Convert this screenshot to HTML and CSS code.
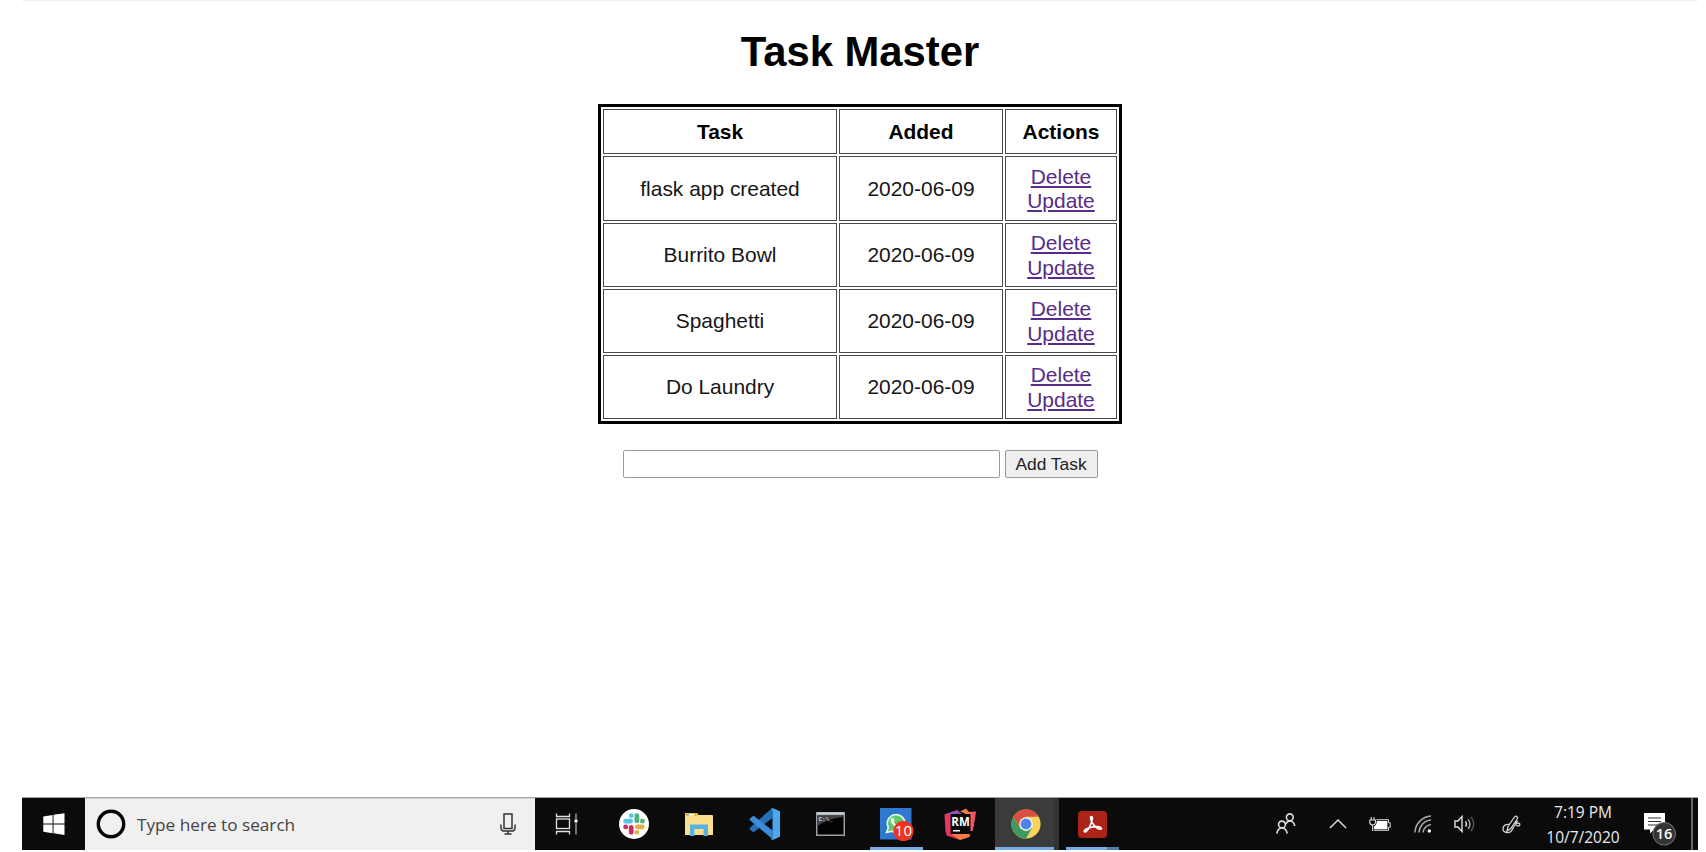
FILE: index.html
```
<!DOCTYPE html>
<html lang="en">
<head>
<meta charset="utf-8">
<title>Task Master</title>
<link rel="stylesheet" href="styles.css">
</head>
<body>
<main class="page">
  <h1 class="title">Task Master</h1>
  <table class="tasks">
    <tr class="head"><th class="c-task">Task</th><th class="c-added">Added</th><th class="c-actions">Actions</th></tr>
    <tr class="first"><td>flask app created</td><td>2020-06-09</td><td><a href="#">Delete</a><br><a href="#">Update</a></td></tr>
    <tr><td>Burrito Bowl</td><td>2020-06-09</td><td><a href="#">Delete</a><br><a href="#">Update</a></td></tr>
    <tr><td>Spaghetti</td><td>2020-06-09</td><td><a href="#">Delete</a><br><a href="#">Update</a></td></tr>
    <tr><td>Do Laundry</td><td>2020-06-09</td><td><a href="#">Delete</a><br><a href="#">Update</a></td></tr>
  </table>
  <form class="add-form">
    <input class="add-input" type="text" aria-label="Task">
    <button class="add-button" type="button">Add Task</button>
  </form>
</main>
<footer class="taskbar">
  <div class="start">
    <svg width="22" height="22" viewBox="0 0 22 22" fill="#fff"><path d="M.3 3.4 9.6 2v8.6H.3zM10.500 1.800 21.500.200v10.400h-11zM.3 11.500h9.300v8.700L.3 18.800zM10.500 11.500h11v10.400l-11-1.600z"/></svg>
  </div>
  <div class="search">
    <svg width="30" height="30" viewBox="0 0 30 30"><circle cx="15" cy="15" r="12.7" fill="none" stroke="#050505" stroke-width="3.4"/></svg>
    <span class="search-text">Type here to search</span>
    <svg class="mic" width="16" height="22" viewBox="0 0 16 22" fill="none" stroke="#333" stroke-width="1.500"><rect x="4" y="1" width="8" height="14.500"/><path d="M1 11.500v3.200c0 2.200 1.300 3.400 3.500 3.400h7c2.200 0 3.500-1.200 3.500-3.400v-3.200M8 18v3M4.500 21h7"/></svg>
  </div>
  <div class="slot view">
    <svg width="24" height="22" viewBox="0 0 24 22" fill="none" stroke="#e2e2e2" stroke-width="1.300"><path d="M1.500.500v3h13v-3M1.500 21.500v-3h13v3"/><rect x="1.500" y="6" width="13" height="9.500"/><path d="M21 .500v5.500M21 10v11.500" stroke="#aaa"/><path d="M19.500 6.500h3v3h-3z" fill="#fff" stroke="none"/></svg>
  </div>
  <div class="slot">
    <svg width="30" height="30" viewBox="0 0 30 30" fill="none" stroke-width="4.800" stroke-linecap="round"><circle cx="15" cy="15" r="15" fill="#fff"/><path d="M6.600 12.200h5M12.200 6.700h.1" stroke="#5bc3ea"/><path d="M17.900 6.700v5.200M23.400 12.200h.1" stroke="#4eb37d"/><path d="M18.300 17.900h5M17.900 23.300h.1" stroke="#e3b04a"/><path d="M12.200 18.300v5M6.600 17.900h.1" stroke="#cf2e5d"/></svg>
  </div>
  <div class="slot">
    <svg width="28" height="24" viewBox="0 0 28 24"><path d="M0 2q0-1 1-1h11l1.500 2H27q1 0 1 1v19H0z" fill="#fae08e"/><path d="M0 1h12.500v3H0z" fill="#edb93c"/><path d="M2 2h7v1.600H2z" fill="#fff"/><path d="M2 2h2v1.600H2z" fill="#55b4e4"/><path d="M5 24V12.500h18V24h-4.500v-7h-9v7z" fill="#58b2e1"/></svg>
  </div>
  <div class="slot">
    <svg width="32" height="32" viewBox="0 0 32 32"><path d="M23.500 1v9L5.300 23.700q-1 .7-1.800.1L1 21.500q-.8-1 0-1.800L22 1z" fill="#2470b5"/><path d="M1 10.500 3.500 8.200q.8-.6 1.800.1L23.500 22.500v8.500L1 12.300q-.8-.9 0-1.800z" fill="#3a8bd8"/><path d="M23.500 0 31 3.200v25.600L23.500 32l-2-1.200q2 .3 2-1.800V3q0-2-2-1.800z" fill="#49a9ef"/></svg>
  </div>
  <div class="slot">
    <svg width="29" height="24" viewBox="0 0 29 24"><path d="M0 0h29v24H0z" fill="#9b9fa2"/><path d="M1 .500h27v2H1z" fill="#c9d3d8"/><path d="M1.500 3.500h26v19h-26z" fill="#020202"/><path d="M1.500 3.500h26v1.500C15 6 8 10 1.500 14z" fill="#414345"/><text x="2.500" y="9.300" class="prompt">C:\_</text></svg>
  </div>
  <div class="slot running whatsapp">
    <svg width="36" height="34" viewBox="0 0 36 34"><path d="M0 1h31.500v31.500H0z" fill="#2f78d0"/><path d="m6.500 25.500 1.800-5A8.800 8.800 0 1 1 12 24.200z" fill="#5fca68" stroke="#e9f5ec" stroke-width="1.600"/><path d="M11.500 11c-3 3 2.500 9.500 7 9.500l2-2.500-3-1.500-1.200 1c-1.500-.5-2.500-2-2.700-3l1-1-1-2.500z" fill="#fff"/><circle cx="23.500" cy="24" r="10.200" fill="#ee3524"/><text x="23.400" y="29.300" class="badge">10</text></svg>
  </div>
  <div class="slot rubymine">
    <svg width="32" height="32" viewBox="0 0 32 32"><path d="M.500 6.500 10 3l12 8-3 18-14-2-3.500-3.500z" fill="#ed3561"/><path d="M3 6 13 2l7 6H7z" fill="#9450b3"/><path d="m10 .5 6 3 6-3 3 3.500 6.500-.5-3 19.500H26V8z" fill="#f27a48"/><path d="M27 4 32 4l-3 18H26z" fill="#f7506a"/><path d="m6 25 20 1-.5 3-9.500 3-10-5z" fill="#fa7c45"/><path d="m1.500 22 6 4 7 5.500-12-4z" fill="#e43463"/><path d="M6.500 6h20v20h-20z" fill="#090909"/><text x="7.300" y="17.500" class="rm">RM</text><path d="M9 22h7v1.500H9z" fill="#fff"/></svg>
  </div>
  <div class="slot running active">
    <svg width="30" height="30" viewBox="0 0 30 30"><circle cx="15" cy="15" r="14.600" fill="#f9d35c"/><path d="M2.300 7.700A14.600 14.600 0 0 1 27.700 7.700H15L8.700 18.600z" fill="#d95043"/><path d="M2.300 7.700A14.600 14.600 0 0 0 15 29.600L21.300 18.600 15 22.200 8.700 18.600z" fill="#3e9b5f"/><circle cx="15" cy="15" r="6.800" fill="#f4f4f4"/><circle cx="15" cy="15" r="5.400" fill="#4b83e9"/></svg>
  </div>
  <div class="slot running stacked">
    <svg width="29" height="27" viewBox="0 0 29 27"><rect width="29" height="27" rx="4" fill="#ac2318"/><path d="M13.500 5.500c-1.800 0-.8 4.500 2 8 2.200 2.900 5 4.800 7 4.700 2-.2.500-2.500-3.500-2.500-5 0-12.500 2-12.700 4.400 0 1.800 3 .9 5.500-4.600 2.300-5 3.500-10 1.700-10z" fill="none" stroke="#fff" stroke-width="1.700"/></svg>
  </div>
  <div class="tray">
    <div class="tray-item people"><svg width="20" height="22" viewBox="0 0 20 22" fill="none" stroke="#dedede" stroke-width="1.600"><circle cx="13.800" cy="4.300" r="3.400"/><circle cx="6" cy="11.500" r="3.400"/><path d="M9.800 11c.8-2 2-3 4-3 2.500 0 4.400 1.700 5 5M.800 20.500c.7-3.500 2.500-5.500 5.200-5.500s4.500 2 5.200 5.500"/></svg></div>
    <div class="tray-item chevron"><svg width="18" height="10" viewBox="0 0 18 10" fill="none" stroke="#d8d8d8" stroke-width="1.500"><path d="m1 9 8-8 8 8"/></svg></div>
    <div class="tray-item battery"><svg width="22" height="15" viewBox="0 0 22 15"><path d="M7.500 2.700h12v3h1.700v4.600h-1.700v3H5" fill="none" stroke="#ddd" stroke-width="1"/><path d="M7.800 4h10.600v8.200H5V9.500Q7.800 8 7.800 4z" fill="#fff"/><path d="M2.200 0v2.500M5 0v2.500M.800 3h5.700v2.500q-.5 2.500-2.800 2.500T.800 5.500zM3.700 8v6" fill="none" stroke="#ddd" stroke-width="1.100"/></svg></div>
    <div class="tray-item wifi"><svg width="18" height="18" viewBox="0 0 18 18" fill="none" stroke="#aaa" stroke-width="1.500"><path d="M1 17.500A17 17 0 0 1 17 1M5 17.500A13 13 0 0 1 17 5M9 17.500A9 9 0 0 1 17 9.500"/><circle cx="15.300" cy="16" r="1.700" fill="#fff" stroke="none"/></svg></div>
    <div class="tray-item"><svg width="21" height="18" viewBox="0 0 21 18" fill="none" stroke="#ddd" stroke-width="1.400"><path d="M1 6h3l4-4.500v15L4 12H1z"/><path d="M11.500 6.500q2 2.500 0 5"/><path d="M14 4.200q4 4.800 0 9.600" stroke="#aaa"/><path d="M17 2q5.500 7 0 14" stroke="#555"/></svg></div>
    <div class="tray-item pen"><svg width="19" height="19" viewBox="0 0 19 19" fill="none" stroke="#d4d4d4" stroke-width="1.300"><path d="M5 16 6 11.500 12.500 2q1-1.500 2.300-.5t.4 2.500L8.800 13.500zM7.500 9.500C4 9 1 10.500 1 13.500c0 5 7 5.500 9 1.500 1.500-3 2.500-5.500 5-6.500 2-.8 3 0 2.800 1.300-.3 1.500-2.300 1.500-3.500.4M13 8.500l3-2.500"/></svg></div>
    <div class="clock"><span class="time">7:19 PM</span><span class="date">10/7/2020</span></div>
    <div class="tray-item notes"><svg width="34" height="34" viewBox="0 0 34 34"><path d="M0 0h21v16.500H10l-4 4v-4H0z" fill="#fff"/><path d="M4 5h13M4 8.500h13M4 12h13" stroke="#333" stroke-width="1.100"/><circle cx="20.200" cy="20.800" r="11.300" fill="#343434" stroke="#777" stroke-width="1"/><text x="20" y="26.300" class="count">16</text></svg></div>
    <div class="peek"></div>
  </div>
</footer>
</body>
</html>
```

FILE: styles.css
```
* { box-sizing: border-box; }
body {
  margin: 0;
  height: 852px;
  padding: 0 8px 2px 22px;
  display: flex;
  flex-direction: column;
  background: #fff;
  color: #000;
  font-family: "Liberation Sans", Arial, sans-serif;
  overflow: hidden;
}
.page {
  flex: 1;
  display: flex;
  flex-direction: column;
  align-items: center;
  border-top: 1px solid #efefef;
}
.title {
  margin: 28px 0 28px;
  height: 47px;
  line-height: 46px;
  font-size: 41.800px;
}
.tasks {
  width: 524px;
  table-layout: fixed;
  border: 3px solid #000;
  border-spacing: 2px;
  font-size: 20.950px;
  line-height: 24.400px;
  text-align: center;
}
.tasks th, .tasks td { border: 1px solid #4a4a4a; padding: 1px 0 0; }
.tasks td { color: #161616; }
.tasks tr { height: 64px; }
.tasks .head { height: 45px; }
.tasks .first { height: 65px; }
.c-task { width: 234px; }
.c-added { width: 164px; }
.c-actions { width: 112px; }
.tasks a { color: #582c8b; }
.add-form {
  display: flex;
  gap: 5px;
  margin-top: 26px;
}
.add-input {
  width: 377px;
  height: 28px;
  border: 1px solid #999;
  border-radius: 2px;
}
.add-button {
  width: 93px;
  height: 28px;
  padding: 1px 0 0;
  border: 1px solid #999;
  border-radius: 2px;
  background: #efefef;
  color: #222;
  font: 17.400px "Liberation Sans", Arial, sans-serif;
}
.taskbar {
  height: 53px;
  display: flex;
  background: #0b0b0b;
  border-top: 1px solid #a4a4a4;
  color: #ececec;
  font-family: "Open Sans", "Noto Sans", sans-serif;
}
.taskbar svg { display: block; flex: none; }
.start { width: 63px; display: flex; align-items: center; justify-content: center; }
.search {
  width: 450px;
  display: flex;
  align-items: center;
  padding: 0 19px 1px 11px;
  background: #f0f0f0;
  border-top: 1px solid #d4d4d4;
}
.search-text { margin-left: 11px; font-size: 17.200px; color: #444; white-space: nowrap; }
.mic { margin-left: auto; }
.slot {
  width: 65.600px;
  display: flex;
  align-items: center;
  justify-content: center;
  background-repeat: no-repeat;
  background-position: center bottom;
  background-size: 53px 3px;
}
.view { width: 66px; padding-right: 3px; }
.running { background-image: linear-gradient(#76aee3, #76aee3); }
.whatsapp { padding-left: 4px; }
.rubymine { padding-right: 3px; }
.active {
  width: 64px;
  margin-right: 1px;
  padding-left: 4px;
  border-right: 5px solid #333;
  background-color: #3b3b3b;
  background-size: 100% 3px;
  background-origin: border-box;
}
.stacked { background-image: linear-gradient(90deg, #76aee3 41px, #557d9f 41px); }
.prompt { font: bold 6px "Liberation Mono", monospace; fill: #ddd; }
.badge { font: 15px "Open Sans", sans-serif; fill: #fff; text-anchor: middle; }
.rm { font: bold 11.500px "Open Sans", sans-serif; fill: #fff; }
.tray { margin-left: auto; display: flex; }
.tray-item { width: 30px; display: flex; align-items: center; justify-content: center; }
.people, .chevron, .wifi { width: 52px; }
.battery { width: 33px; padding-right: 1px; }
.pen { width: 64px; }
.notes { width: 68px; padding: 12px 0 0 7px; }
.clock {
  width: 80px;
  display: flex;
  flex-direction: column;
  align-items: center;
  padding-top: 2px;
  font-size: 15.500px;
  line-height: 24.500px;
}
.count { font: 600 14.500px "Open Sans", sans-serif; fill: #fff; text-anchor: middle; }
.peek { width: 7px; border-left: 2px solid #666; }
```
